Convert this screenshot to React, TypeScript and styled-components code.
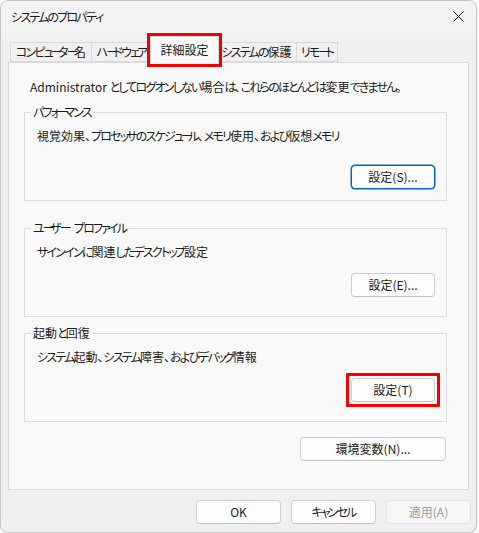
import styled, { createGlobalStyle } from "styled-components";

const GlobalStyle = createGlobalStyle`
  html, body {
    margin: 0;
    padding: 0;
    background: #ffffff;
  }
  body {
    font-family: "Noto Sans CJK JP", "Noto Sans", sans-serif;
    font-size: 12px;
    font-feature-settings: "palt";
    color: #1b1b1b;
  }
`;

// Yu Gothic UI sets kana much narrower than Noto Sans CJK, so kana runs get tightened;
// small kana and the long vowel mark even more
type Kind = "bar" | "small" | "kana" | "space" | "other";

const kindOf = (ch: string): Kind => {
  if (ch === "ー") return "bar";
  if ("ぁぃぅぇぉっゃゅょァィゥェォッャュョ".includes(ch)) return "small";
  if (/[\u3040-\u30ff]/.test(ch)) return "kana";
  if (ch === " ") return "space";
  return "other";
};

const splitRuns = (text: string) => {
  const runs: { kind: Kind; text: string }[] = [];
  for (const ch of text) {
    const kind = kindOf(ch);
    const last = runs[runs.length - 1];
    if (last && last.kind === kind) last.text += ch;
    else runs.push({ kind, text: ch });
  }
  return runs;
};

const Jp = ({ children }: { children: string }) => {
  const runs = splitRuns(children);
  return (
    <>
      {runs.map((run, i) => {
        if (run.kind === "other") return run.text;
        if (run.kind === "space")
          return (
            <Space key={i} $afterKana={i > 0 && runs[i - 1].kind !== "other"}>
              {run.text}
            </Space>
          );
        return (
          <Kana key={i} $kind={run.kind}>
            {run.text}
          </Kana>
        );
      })}
    </>
  );
};

const groups = [
  {
    title: "パフォーマンス",
    text: "視覚効果、プロセッサのスケジュール、メモリ使用、および仮想メモリ",
    button: "設定(S)...",
    gap: 21,
    top: 9,
    focused: true,
    marked: false,
  },
  {
    title: "ユーザー プロファイル",
    text: "サインインに関連したデスクトップ設定",
    button: "設定(E)...",
    gap: 13,
    top: 19,
    focused: false,
    marked: false,
  },
  {
    title: "起動と回復",
    text: "システム起動、システム障害、およびデバッグ情報",
    button: "設定(T)",
    gap: 13,
    top: 8,
    focused: false,
    marked: true,
  },
];

const tabs = [
  { label: "コンピューター名", width: 82 },
  { label: "ハードウェア", width: 60 },
  { label: "詳細設定", width: 69, active: true },
  { label: "システムの保護", width: 80 },
  { label: "リモート", width: 41 },
];

const App = () => {
  return (
    <>
      <GlobalStyle />
      <Window>
        <TitleBar>
          <Title>
            <Jp>システムのプロパティ</Jp>
          </Title>
          <CloseButton>
            <svg width="11" height="11" viewBox="0 0 11 11">
              <path d="M0.5 0.5 L10.5 10.5 M10.5 0.5 L0.5 10.5" stroke="#1a1a1a" strokeWidth="1" />
            </svg>
          </CloseButton>
        </TitleBar>

        <Body>
          <TabStrip>
            {tabs.map((t) => (
              <Tab key={t.label} $active={!!t.active} $width={t.width}>
                <Jp>{t.label}</Jp>
              </Tab>
            ))}
          </TabStrip>

          <Panel>
            <Info>
              <Jp>Administrator としてログオンしない場合は、これらのほとんどは変更できません。</Jp>
            </Info>

            {groups.map((g) => {
              const button = (
                <GroupButton $focused={g.focused}>
                  <Jp>{g.button}</Jp>
                </GroupButton>
              );
              return (
                <Group key={g.title} $top={g.top}>
                  <Legend>
                    <Jp>{g.title}</Jp>
                  </Legend>
                  <GroupBody>
                    <Description>
                      <Jp>{g.text}</Jp>
                    </Description>
                    <ButtonSlot $gap={g.gap}>
                      {g.marked ? <Marker>{button}</Marker> : button}
                    </ButtonSlot>
                  </GroupBody>
                </Group>
              );
            })}

            <EnvRow>
              <EnvButton>環境変数(N)...</EnvButton>
            </EnvRow>
          </Panel>

          <Footer>
            <FooterButton>OK</FooterButton>
            <FooterButton>
              <Jp>キャンセル</Jp>
            </FooterButton>
            <FooterButton disabled>適用(A)</FooterButton>
          </Footer>
        </Body>
      </Window>
    </>
  );
};

export default App;

const Kana = styled.span<{ $kind: Kind }>`
  letter-spacing: ${(p) =>
    p.$kind === "bar" ? "-4.6px" : p.$kind === "small" ? "-3px" : "-1.8px"};
`;

const Space = styled.span<{ $afterKana: boolean }>`
  margin-left: ${(p) => (p.$afterKana ? "4px" : "0")};
`;

const Window = styled.div`
  width: 477px;
  box-sizing: border-box;
  border: 1px solid #c6c6c6;
  border-radius: 8px;
  background: #f0f0f0;
  overflow: hidden;
  box-shadow: 0 1px 3px rgba(0, 0, 0, 0.12);
`;

const TitleBar = styled.div`
  height: 31px;
  display: flex;
  align-items: center;
  justify-content: space-between;
  padding: 0 8px 1px 10px;
  background: #f3f3f3;
`;

const Title = styled.div`
  font-size: 12px;
  line-height: 16px;
  color: #1a1a1a;
`;

const CloseButton = styled.div`
  width: 20px;
  height: 20px;
  display: flex;
  align-items: center;
  justify-content: center;
`;

const Body = styled.div`
  padding: 0 5px 8px 7px;
`;

const TabStrip = styled.div`
  height: 29px;
  display: flex;
  align-items: flex-end;
  padding-left: 2px;
  position: relative;
  z-index: 1;
`;

const Tab = styled.div<{ $active: boolean; $width: number }>`
  box-sizing: border-box;
  flex: none;
  width: ${(p) => p.$width}px;
  height: ${(p) => (p.$active ? "28px" : "20px")};
  margin: ${(p) => (p.$active ? "0 -2px -2px" : "0")};
  padding-bottom: ${(p) => (p.$active ? "2px" : "0")};
  border: 1px solid #d9d9d9;
  border-bottom: ${(p) => (p.$active ? "none" : "1px solid #d9d9d9")};
  border-left-width: ${(p) => (p.$active ? "1px" : "0")};
  background: ${(p) => (p.$active ? "#f9f9f9" : "#f0f0f0")};
  display: flex;
  align-items: center;
  justify-content: center;
  line-height: 16px;
  white-space: nowrap;
  position: relative;
  z-index: ${(p) => (p.$active ? 2 : 0)};
  outline: ${(p) => (p.$active ? "3px solid #f00000" : "none")};

  &:first-child {
    border-left-width: 1px;
  }
`;

const Panel = styled.div`
  box-sizing: border-box;
  width: 461px;
  height: 428px;
  border: 1px solid #d9d9d9;
  background: #f9f9f9;
  padding: 16px 21px 0 15px;
`;

const Info = styled.div`
  margin-left: 6px;
  line-height: 16px;
  white-space: nowrap;
`;

const Group = styled.fieldset<{ $top: number }>`
  margin: ${(p) => p.$top}px 0 0;
  padding: 0;
  min-width: 0;
  border: 1px solid #dcdcdc;
`;

const Legend = styled.legend`
  margin-left: 6px;
  padding: 0 2px;
  line-height: 16px;
`;

const GroupBody = styled.div`
  box-sizing: border-box;
  height: 80px;
  display: flex;
  flex-direction: column;
  padding: 8px 11px 0 12px;
`;

const Description = styled.div`
  line-height: 16px;
  white-space: nowrap;
`;

const ButtonSlot = styled.div<{ $gap: number }>`
  display: flex;
  justify-content: flex-end;
  margin-top: ${(p) => p.$gap}px;
`;

// red annotation frame drawn over the button
const Marker = styled.span`
  position: relative;
  display: inline-flex;

  &::after {
    content: "";
    position: absolute;
    inset: -5px;
    border: 3px solid #f00000;
    border-radius: 1px;
    pointer-events: none;
  }
`;

const Button = styled.button`
  box-sizing: border-box;
  height: 24px;
  font-family: inherit;
  font-size: 12px;
  font-feature-settings: "palt";
  color: #1b1b1b;
  background: #fdfdfd;
  border: 1px solid #d0d0d0;
  border-bottom-color: #c2c2c2;
  border-radius: 4px;
  padding: 0;
  line-height: 16px;

  &:disabled {
    color: #9d9d9d;
    background: #f7f7f7;
    border-color: #e3e3e3;
  }
`;

const GroupButton = styled(Button)<{ $focused: boolean }>`
  width: 84px;
  ${(p) =>
    p.$focused &&
    `
    border: 1px solid #0067c0;
    box-shadow: 0 0 0 0.5px #0067c0;
  `}
`;

const EnvRow = styled.div`
  display: flex;
  justify-content: flex-end;
  margin-top: 15px;
  padding-right: 1px;
`;

const EnvButton = styled(Button)`
  width: 146px;
`;

const Footer = styled.div`
  display: flex;
  justify-content: flex-end;
  gap: 10px;
  padding-top: 10px;
`;

const FooterButton = styled(Button)`
  width: 85px;
`;
